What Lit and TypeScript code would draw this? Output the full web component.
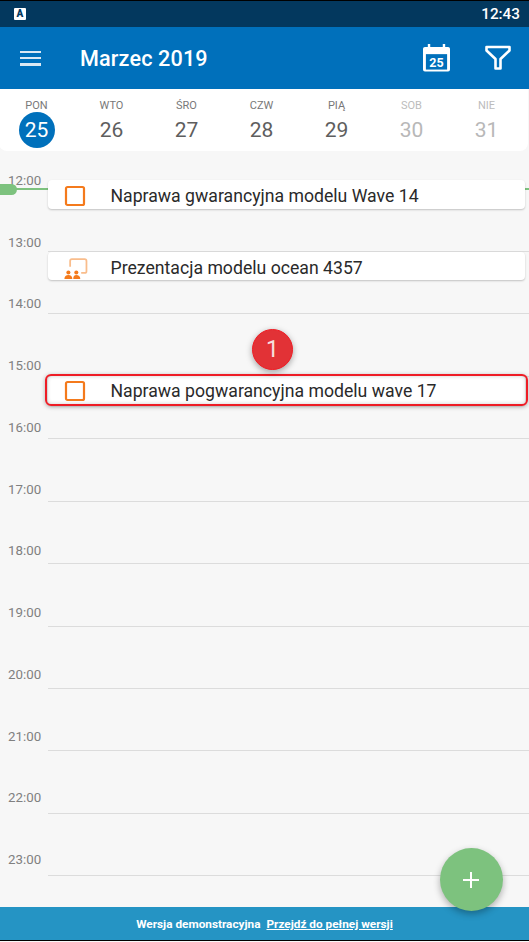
import { LitElement, html, css, svg } from "lit";
import { customElement } from "lit/decorators.js";

const days = [
  ["PON", "25", "today"],
  ["WTO", "26", ""],
  ["ŚRO", "27", ""],
  ["CZW", "28", ""],
  ["PIĄ", "29", ""],
  ["SOB", "30", "off"],
  ["NIE", "31", "off"],
];
const hours = ["12:00","13:00","14:00","15:00","16:00","17:00","18:00","19:00","20:00","21:00","22:00","23:00"];

const box = svg`<svg class="ic" width="22" height="22" viewBox="0 0 22 22"><rect x="2" y="2" width="18" height="18" rx="1.500" fill="none" stroke="#f47a1c" stroke-width="2.200"/></svg>`;
const pres = svg`<svg class="ic" width="30" height="23" viewBox="0 0 34 26"><path d="M11.500 11V4.500a2 2 0 0 1 2-2h14.500a2 2 0 0 1 2 2V16a2 2 0 0 1-2 2h-4" fill="none" stroke="#f9bd8c" stroke-width="2"/><g fill="#f47a1c"><circle cx="9.500" cy="17.500" r="2.300"/><path d="M5 25c0-3 1.800-4.600 4.500-4.600S14 22 14 25z"/><circle cx="18.500" cy="17.500" r="2.300"/><path d="M15 25c0-3 1-4.600 3.500-4.600S23 22 23 25z"/></g></svg>`;

@customElement("app-root")
export class AppRoot extends LitElement {
  static styles = css`
    :host { display: block; width: 529px; height: 942px; position: relative; overflow: hidden; background: #f7f7f7; font-family: Roboto, sans-serif; }
    .status { height: 26px; border-top: 1px solid #000; background: #03385e; display: flex; align-items: center; justify-content: space-between; padding: 0 9px 0 14px; color: #fff; font-size: 15.300px; font-weight: 500; }
    .applogo { width: 12px; height: 12px; background: #fff; border-radius: 1px; color: #03385e; font-size: 10px; font-weight: 900; display: flex; justify-content: center; line-height: 11px; }
    .header { height: 62px; background: #0070bb; display: flex; align-items: center; color: #fff; }
    .menu { margin-left: 20px; width: 21px; height: 15px; display: flex; flex-direction: column; justify-content: space-between; }
    .menu i { display: block; height: 2.500px; background: #dbe9f4; }
    .title { margin-left: 39px; font-size: 21.600px; font-weight: 500; flex: 1; letter-spacing: 0.150px; }
    .cal { margin-right: 35px; display: block; }
    .funnel { margin-right: 18px; display: block; }
    .week { height: 62px; background: #fff; border-radius: 0 0 8px 8px; display: grid; grid-template-columns: repeat(7, 75px); margin-left: -1px; margin-right: 1px; padding-left: 0; }
    .day { display: flex; flex-direction: column; align-items: center; color: #5e5e5e; }
    .day.off { color: #b8b8b8; }
    .dn { font-size: 11px; line-height: 13px; margin-top: 10px; color: #787878; }
    .dd { font-size: 21px; line-height: 36px; width: 36px; height: 36px; text-align: center; }
    .today .dd { background: #0070bb; color: #fff; border-radius: 50%; }
    .off .dn { color: #bcbcbc; }
    .timeline { position: relative; padding-top: 21.800px; display: flex; align-items: flex-start; }
    .labels { width: 48px; flex: none; padding-left: 8px; box-sizing: border-box; }
    .lab { height: 61.750px; font-size: 13.300px; color: #808080; line-height: 16px; }
    .lines { flex: 1; padding-top: 16.700px; }
    .row { height: 62.450px; box-sizing: border-box; border-bottom: 1px solid #dcdcdc; }
    .nowline { position: absolute; left: 0; right: 0; top: 37px; height: 2px; background: #7dc27e; }
    .nowpill { position: absolute; left: 0; top: 33px; width: 17px; height: 11px; background: #7dc27e; border-radius: 0 5.500px 5.500px 0; }
    .ev { position: absolute; left: 48px; width: 477px; height: 29px; box-sizing: border-box; background: #fff; border-radius: 4px; box-shadow: 0 1px 2px rgba(0,0,0,.22); display: flex; align-items: center; font-size: 17.660px; color: #2a2a2a; z-index: 2; }
    .ev .slot { width: 56px; display: flex; justify-content: center; flex: none; margin-left: -1px; }
    .ev .txt { margin-left: 7.500px; white-space: nowrap; }
    .ev.a { top: 29px; padding-top: 3px; }
    .ev.b { top: 101px; height: 28px; padding-top: 4px; }
    .ev.c { top: 225px; }
    .hl { position: absolute; left: 45px; top: 223px; width: 483px; height: 32px; box-sizing: border-box; border: 2px solid #ee1c25; border-radius: 6px; z-index: 3; box-shadow: 0 1px 4px rgba(0,0,0,.3), inset 0 0 4px rgba(0,0,0,.2); }
    .badge { position: absolute; left: 252px; top: 178px; width: 41px; height: 41px; box-sizing: border-box; border: 1px solid #f01c24; border-radius: 50%; background: #e23236; color: #f6e0e0; font-size: 23px; font-weight: 400; display: flex; align-items: center; justify-content: center; box-shadow: 0 2px 6px rgba(0,0,0,.35); z-index: 3; }
    .fab { position: absolute; left: 440px; top: 848px; width: 63px; height: 63px; border-radius: 50%; background: #7dc27e; box-shadow: 0 3px 7px rgba(0,0,0,.3); display: flex; align-items: center; justify-content: center; z-index: 5; }
    .fab svg { margin-right: 1px; }
    .demo { position: absolute; left: 0; right: 0; top: 907px; height: 34px; padding-top: 1px; box-sizing: border-box; background: #2594c4; border-bottom: 1px solid #000; color: #fff; font-size: 11.800px; font-weight: 700; display: flex; justify-content: center; align-items: center; gap: 6px; z-index: 4; }
    .demo u { font-weight: 700; }
  `;

  render() {
    return html`
      <div class="status">
        <div class="applogo">A</div>
        <div>12:43</div>
      </div>
      <div class="header">
        <div class="menu"><i></i><i></i><i></i></div>
        <div class="title">Marzec 2019</div>
        <svg class="cal" width="27" height="30" viewBox="0 0 28 30">
          <path d="M0 5.500a2 2 0 0 1 2-2h3V0.500h2.500v3h13V0.500H23v3h3a2 2 0 0 1 2 2V27a2 2 0 0 1-2 2H2a2 2 0 0 1-2-2z" fill="#fff"/>
          <rect x="3" y="11" width="22" height="16" fill="#0070bb"/>
          <text x="14" y="24" text-anchor="middle" font-family="Roboto, sans-serif" font-size="13" font-weight="700" fill="#fff">25</text>
        </svg>
        <svg class="funnel" width="26" height="26" viewBox="0 0 26 26">
          <path d="M1.500 2h23v3.500L15.500 14v9.500h-5V14L1.500 5.500z" fill="none" stroke="#fff" stroke-width="2.600" stroke-linejoin="round"/>
        </svg>
      </div>
      <div class="week">
        ${days.map(([n, d, c]) => html`<div class="day ${c}"><div class="dn">${n}</div><div class="dd">${d}</div></div>`)}
      </div>
      <div class="timeline">
        <div class="nowline"></div>
        <div class="nowpill"></div>
        <div class="labels">${hours.map((h) => html`<div class="lab">${h}</div>`)}</div>
        <div class="lines">${hours.slice(1).map(() => html`<div class="row"></div>`)}</div>
        <div class="ev a"><div class="slot">${box}</div><div class="txt">Naprawa gwarancyjna modelu Wave 14</div></div>
        <div class="ev b"><div class="slot">${pres}</div><div class="txt">Prezentacja modelu ocean 4357</div></div>
        <div class="ev c"><div class="slot">${box}</div><div class="txt">Naprawa pogwarancyjna modelu wave 17</div></div>
        <div class="hl"></div>
        <div class="badge">1</div>
      </div>
      <div class="fab">
        <svg width="16" height="16" viewBox="0 0 16 16"><path d="M8 0v16M0 8h16" stroke="#fff" stroke-width="2"/></svg>
      </div>
      <div class="demo"><span>Wersja demonstracyjna</span><u>Przejdź do pełnej wersji</u></div>
    `;
  }
}
